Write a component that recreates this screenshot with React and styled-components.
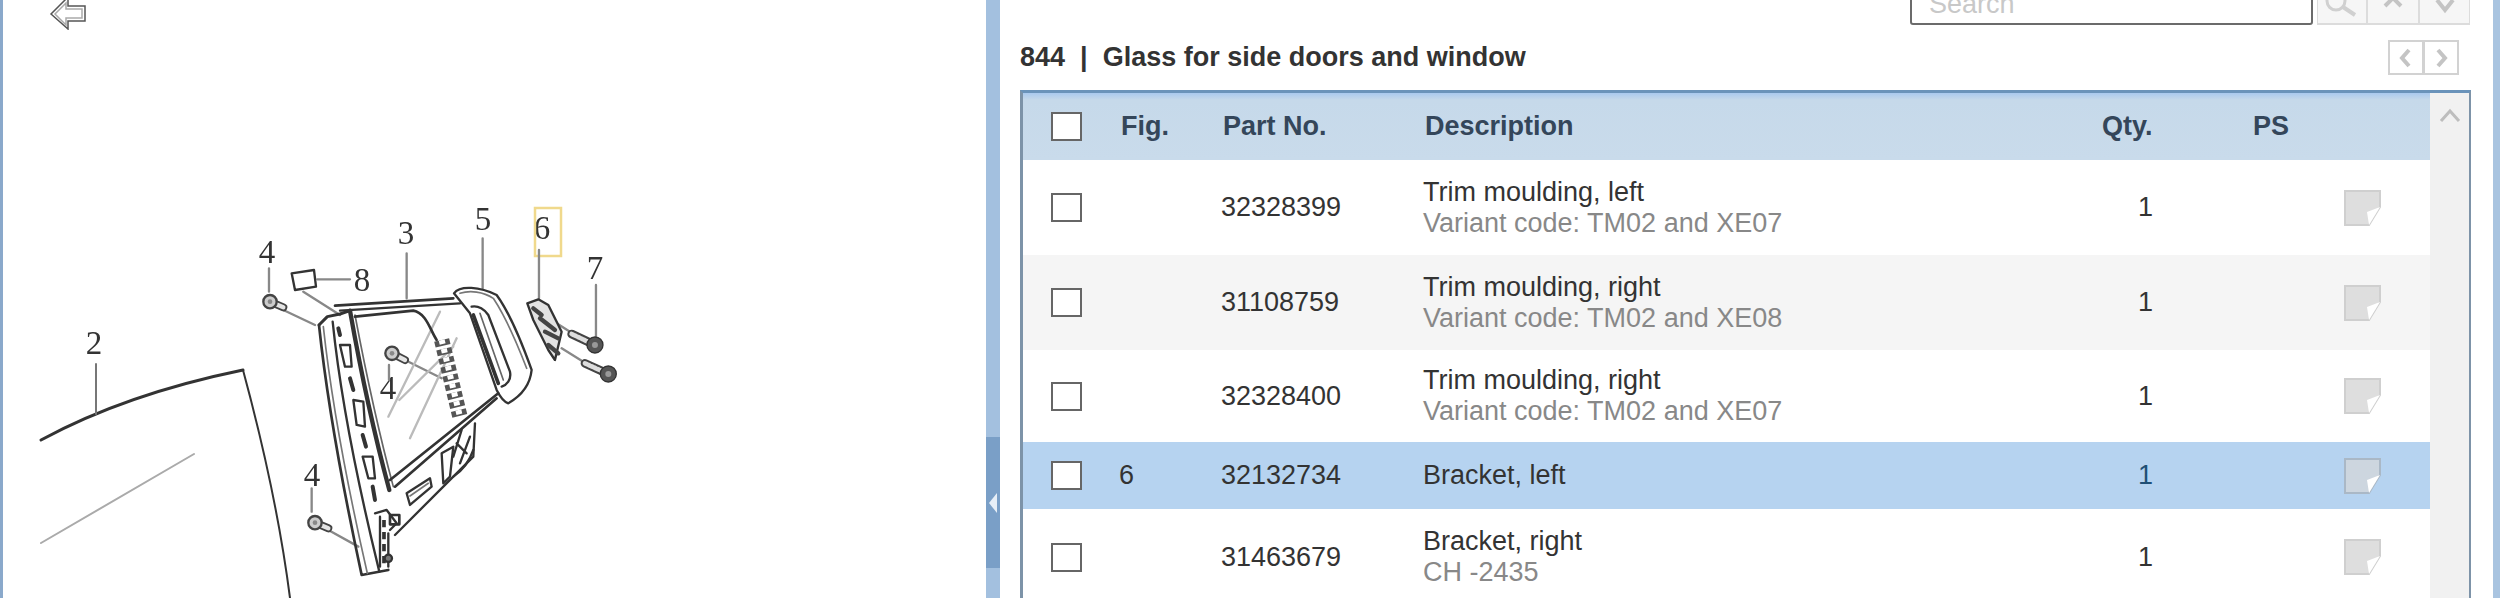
import React from "react";
import styled, { createGlobalStyle } from "styled-components";

const rows = [
  { id: 1, partNo: "32328399", name: "Trim moulding, left", note: "Variant code: TM02 and XE07", height: 95 },
  { id: 2, partNo: "31108759", name: "Trim moulding, right", note: "Variant code: TM02 and XE08", height: 95, tone: "alt" },
  { id: 3, partNo: "32328400", name: "Trim moulding, right", note: "Variant code: TM02 and XE07", height: 92 },
  { id: 4, fig: "6", partNo: "32132734", name: "Bracket, left", height: 67, tone: "selected" },
  { id: 5, partNo: "31463679", name: "Bracket, right", note: "CH -2435", height: 96 },
];

const rowBackgrounds = { alt: "#f5f5f5", selected: "#b6d3f0" };

const NoteIcon = ({ selected }) => (
  <svg width="37" height="36" viewBox="0 0 37 36">
    <path d="M1 1H36V17L25 35H1Z" fill={selected ? "#cdd6df" : "#dedede"} stroke={selected ? "#aab8c6" : "#cfcfcf"} strokeWidth="2" />
    <path d="M36 17L25 35L23 22Z" fill="#fff" />
  </svg>
);

const Chevron = ({ points, color = "#c4c4c4", width = 4 }) => (
  <svg width="24" height="24" viewBox="0 0 24 24">
    <polyline points={points} fill="none" stroke={color} strokeWidth={width} />
  </svg>
);

// small clip screw of the drawing, head at x/y and shank running to tx/ty
const Clip = ({ x, y, tx, ty }) => (
  <g>
    <line x1={x} y1={y} x2={tx} y2={ty} stroke="#444" strokeWidth="24" />
    <line x1={x} y1={y} x2={tx} y2={ty} stroke="#e4e4e4" strokeWidth="13" />
    <circle cx={x} cy={y} r="20" fill="#ccc" stroke="#444" strokeWidth="7" />
    <circle cx={x} cy={y} r="7" fill="#888" stroke="none" />
  </g>
);

const Screw = ({ x, y, tx, ty }) => (
  <g>
    <line x1={x} y1={y} x2={tx} y2={ty} stroke="#444" strokeWidth="26" />
    <line x1={x} y1={y} x2={tx} y2={ty} stroke="#ddd" strokeWidth="14" strokeDasharray="6 4" />
    <circle cx={tx} cy={ty} r="24" fill="#555" stroke="#333" strokeWidth="4" />
    <circle cx={tx} cy={ty} r="9" fill="#999" stroke="none" />
  </g>
);

const Diagram = () => (
  <DiagramSvg viewBox="3 0 983 598">
    <g fill="none" stroke="#333" strokeWidth="2" strokeLinecap="round">
      <path d="M41 440C100 408 170 385 243 370" strokeWidth="3" />
      <path d="M243 370C262 440 280 520 290 598" />
      <path d="M41 543L194 454" stroke="#aaa" />
      <path d="M96 364V414" stroke="#777" />
    </g>
    <g fontFamily="'Liberation Serif', serif" fontSize="33" fill="#333" textAnchor="middle">
      <text x="94" y="354">2</text>
      <text x="267" y="263">4</text>
      <text x="406" y="244">3</text>
      <text x="483" y="230">5</text>
      <text x="542" y="239">6</text>
      <text x="595" y="279">7</text>
      <text x="362" y="291">8</text>
      <text x="388" y="399">4</text>
      <text x="312" y="486">4</text>
    </g>
    <rect x="535" y="208" width="26" height="48" fill="none" stroke="#f0d98c" strokeWidth="2.5" />
    <g transform="translate(240 190) scale(.3333)" fill="none" stroke="#333" strokeWidth="7" strokeLinejoin="round" strokeLinecap="round">
      <g stroke="#888">
        <path d="M87 235V305M130 360L225 405M232 268H330M190 305L300 375M500 190V325M728 145V295M897 180V325M1068 285V440" />
        <path d="M447 525V570M495 510L605 565M215 895V965M265 1020L355 1070M950 400L990 425M965 475L1030 515" />
      </g>
      <g stroke="#bbb">
        <path d="M445 680L600 365M510 745L650 445M478 630L640 470" />
      </g>
      <path d="M155 250L222 240L228 290L165 300Z" />
      <path d="M237 405C262 640 310 900 365 1155L445 1140" strokeWidth="8" />
      <path d="M250 410C275 640 325 900 382 1150" stroke="#777" strokeWidth="5" />
      <path d="M278 395C303 640 358 900 418 1145" />
      <path d="M330 362C365 560 410 760 448 900" strokeWidth="13" />
      <path d="M345 375C380 560 425 760 460 890" stroke="#666" strokeWidth="5" />
      <path d="M237 405L262 380L300 372L330 362" strokeWidth="9" />
      <path d="M285 347L640 325" strokeWidth="8" />
      <path d="M300 362L660 340" />
      <path d="M345 380L520 362C560 370 570 420 590 450" strokeWidth="8" />
      <path d="M605 450C620 510 640 600 660 680" stroke="#555" strokeWidth="46" strokeDasharray="18 9" strokeLinecap="butt" />
      <path d="M605 450C620 510 640 600 660 680" stroke="#fff" strokeWidth="18" strokeDasharray="13 14" strokeLinecap="butt" />
      <path d="M642 310C660 285 720 290 770 315C810 370 850 470 875 540C870 590 840 620 805 640C790 635 780 620 770 600L690 370Z" fill="#fff" />
      <path d="M660 310C690 300 730 305 760 325C800 385 835 470 860 535" stroke="#777" strokeWidth="5" />
      <path d="M695 350C715 345 735 360 745 375L810 545C815 570 800 585 785 590" />
      <path d="M700 375L775 580" strokeWidth="11" />
      <path d="M720 370L790 570" stroke="#666" strokeWidth="5" />
      <path d="M775 610L450 870" strokeWidth="8" />
      <path d="M770 625L465 890" strokeWidth="8" />
      <path d="M465 1035L700 800L705 700" />
      <path d="M700 780C690 810 670 840 640 860M665 720L640 800M690 740L660 820M650 760L680 790" />
      <path d="M500 910L570 865L575 890L510 945Z" />
      <path d="M510 918L565 880" stroke="#777" strokeWidth="5" />
      <path d="M605 790L640 770L630 860L610 880Z" />
      <path d="M300 465L330 465L335 530L315 530ZM340 630L370 635L375 710L350 705ZM368 800L398 800L405 865L385 865Z" strokeWidth="7" />
      <path d="M295 415L300 435M330 565L340 600M368 735L378 770M398 890L405 930" strokeWidth="12" />
      <path d="M405 970L440 960L470 1000L450 1020M420 980V1130M445 1030L445 1130" />
      <path d="M432 990V1120" strokeWidth="11" strokeDasharray="22 14" strokeLinecap="butt" />
      <rect x="450" y="975" width="28" height="28" strokeWidth="8" />
      <circle cx="445" cy="1105" r="11" fill="#777" />
      <path d="M862 340L895 328L925 345L965 425L945 510L925 480L880 390Z" fill="#e2e2e2" />
      <path d="M880 355L905 375M900 385L945 420M915 425L955 445M925 465L955 490" stroke="#444" strokeWidth="13" />
      <Clip x={90} y={335} tx={130} ty={352} />
      <Clip x={456} y={490} tx={495} ty={510} />
      <Clip x={225} y={998} tx={265} ty={1015} />
      <Screw x={995} y={432} tx={1065} ty={465} />
      <Screw x={1035} y={520} tx={1105} ty={552} />
    </g>
  </DiagramSvg>
);

export default function App() {
  return (
    <Page>
      <GlobalStyle />
      <LeftPanel>
        <BackButton viewBox="0 0 40 30">
          <path d="M3 14L20 -3V6H37V21H20V29Z" fill="none" stroke="#555" strokeWidth="1.5" />
          <path d="M7 14L18 3V9H34V18H18V25Z" fill="none" stroke="#aaa" strokeWidth="1.5" />
        </BackButton>
        <Diagram />
      </LeftPanel>
      <Splitter>
        <SplitterHandle>
          <SplitterArrow />
        </SplitterHandle>
      </Splitter>
      <RightPanel>
        <Toolbar>
          <SearchInput>Search</SearchInput>
          <ToolGroup>
            <ToolButton $width={50}>
              <svg width="36" height="36" viewBox="0 0 36 36">
                <circle cx="12" cy="15" r="9" fill="none" stroke="#d0d0d0" strokeWidth="3" />
                <line x1="19" y1="21" x2="31" y2="29" stroke="#d0d0d0" strokeWidth="4" />
              </svg>
            </ToolButton>
            <ToolButton $width={52}>
              <Chevron points="4,14 12,6 20,14" />
            </ToolButton>
            <ToolButton $width={51}>
              <Chevron points="4,8 12,18 20,8" />
            </ToolButton>
          </ToolGroup>
        </Toolbar>
        <TitleRow>
          <Title>
            844<TitleBar>|</TitleBar>Glass for side doors and window
          </Title>
          <Pager>
            <PagerButton>
              <Chevron points="15,4 8,12 15,20" />
            </PagerButton>
            <PagerButton>
              <Chevron points="9,4 16,12 9,20" />
            </PagerButton>
          </Pager>
        </TitleRow>
        <Table>
          <Rows>
            <HeaderRow>
              <CheckCell><Checkbox /></CheckCell>
              <HeaderCell>Fig.</HeaderCell>
              <HeaderCell>Part No.</HeaderCell>
              <HeaderCell>Description</HeaderCell>
              <HeaderCell $flush>Qty.</HeaderCell>
              <HeaderCell $flush>PS</HeaderCell>
            </HeaderRow>
            {rows.map((row) => (
              <Row key={row.id} $height={row.height} $tone={row.tone}>
                <CheckCell><Checkbox /></CheckCell>
                <Cell>{row.fig}</Cell>
                <Cell>{row.partNo}</Cell>
                <div>
                  <Cell as="div">{row.name}</Cell>
                  {row.note && <Note>{row.note}</Note>}
                </div>
                <QtyCell $selected={row.tone === "selected"}>1</QtyCell>
                <span />
                <NoteCell>
                  <NoteIcon selected={row.tone === "selected"} />
                </NoteCell>
              </Row>
            ))}
          </Rows>
          <ScrollBar>
            <Chevron points="3,16 12,6 21,16" color="#bdbdbd" width={3} />
          </ScrollBar>
        </Table>
      </RightPanel>
    </Page>
  );
}

const GlobalStyle = createGlobalStyle`
  html, body {
    margin: 0;
    background: #fff;
  }
  body {
    font-family: "Liberation Sans", Arial, sans-serif;
    color: #333;
  }
`;

const Page = styled.div`
  display: flex;
  width: 2500px;
  height: 598px;
  overflow: hidden;
  box-sizing: border-box;
  border-left: 3px solid #8aa9cb;
  border-right: 7px solid #a9c4e0;
`;

const LeftPanel = styled.div`
  position: relative;
  width: 983px;
  flex: none;
`;

const BackButton = styled.svg`
  position: absolute;
  top: 0;
  left: 45px;
  width: 40px;
  height: 30px;
`;

const DiagramSvg = styled.svg`
  display: block;
  width: 983px;
  height: 598px;
  filter: blur(0.5px);
`;

const Splitter = styled.div`
  width: 14px;
  flex: none;
  padding-top: 437px;
  background: #a3c0df;
`;

const SplitterHandle = styled.div`
  display: flex;
  align-items: center;
  justify-content: center;
  height: 131px;
  background: #7a9fc7;
`;

const SplitterArrow = styled.div`
  border-top: 10px solid transparent;
  border-bottom: 10px solid transparent;
  border-right: 8px solid #e6eef7;
`;

const RightPanel = styled.div`
  flex: 1;
  min-width: 0;
  padding: 0 22px 0 20px;
`;

const Toolbar = styled.div`
  display: flex;
  justify-content: flex-end;
  align-items: flex-end;
  gap: 4px;
  height: 25px;
  overflow: hidden;
  padding-right: 1px;
`;

const SearchInput = styled.div`
  width: 403px;
  height: 42px;
  flex: none;
  box-sizing: border-box;
  padding: 0 0 0 17px;
  border: 2px solid #6b6b6b;
  border-radius: 3px;
  font-size: 27px;
  line-height: 38px;
  color: #c8c8c8;
`;

const ToolGroup = styled.div`
  display: flex;
  flex: none;
`;

const ToolButton = styled.div`
  display: flex;
  align-items: center;
  justify-content: center;
  width: ${(p) => p.$width}px;
  height: 42px;
  box-sizing: border-box;
  background: #f6f6f6;
  border: 1px solid #dcdcdc;
  border-bottom-width: 2px;
  overflow: hidden;
`;

const TitleRow = styled.div`
  display: flex;
  align-items: center;
  justify-content: space-between;
  height: 65px;
  padding-right: 12px;
`;

const Title = styled.div`
  font-size: 27px;
  font-weight: 700;
  color: #333;
`;

const TitleBar = styled.span`
  margin: 0 15px;
`;

const Pager = styled.div`
  display: flex;
`;

const PagerButton = styled.div`
  display: flex;
  align-items: center;
  justify-content: center;
  width: 36px;
  height: 35px;
  box-sizing: border-box;
  border: 2px solid #d2d2d2;
  & + & {
    margin-left: -1px;
  }
`;

const Table = styled.div`
  display: flex;
  box-sizing: border-box;
  height: 533px;
  border-top: 3px solid #6a93ba;
  border-left: 3px solid #7d93a8;
  border-right: 2px solid #7d93a8;
`;

const Rows = styled.div`
  flex: 1;
  min-width: 0;
`;

const rowColumns = "96px 102px 202px 679px 151px 91px 86px";

const HeaderRow = styled.div`
  display: grid;
  grid-template-columns: ${rowColumns};
  align-items: center;
  height: 67px;
  background: linear-gradient(#a9c9ee 0, #c6d9ea 7px, #c9dbeb 100%);
`;

const HeaderCell = styled.div`
  padding-left: ${(p) => (p.$flush ? 0 : 2)}px;
  font-size: 27px;
  font-weight: 700;
  color: #34465a;
`;

const Row = styled.div`
  display: grid;
  grid-template-columns: ${rowColumns};
  align-items: center;
  height: ${(p) => p.$height}px;
  background: ${(p) => rowBackgrounds[p.$tone] || "#fff"};
`;

const CheckCell = styled.div`
  padding-left: 28px;
`;

const Checkbox = styled.div`
  width: 31px;
  height: 29px;
  box-sizing: border-box;
  background: #fff;
  border: 2px solid #666;
`;

const Cell = styled.span`
  font-size: 27px;
  line-height: 31px;
  color: #333;
`;

const Note = styled.div`
  font-size: 27px;
  line-height: 31px;
  color: #888;
`;

const QtyCell = styled.div`
  padding-left: 36px;
  font-size: 27px;
  color: ${(p) => (p.$selected ? "#1f4f75" : "#333")};
`;

const NoteCell = styled.div`
  display: flex;
`;

const ScrollBar = styled.div`
  display: flex;
  justify-content: center;
  flex: none;
  width: 39px;
  padding-top: 12px;
  box-sizing: border-box;
  background: #f1f1f1;
`;
